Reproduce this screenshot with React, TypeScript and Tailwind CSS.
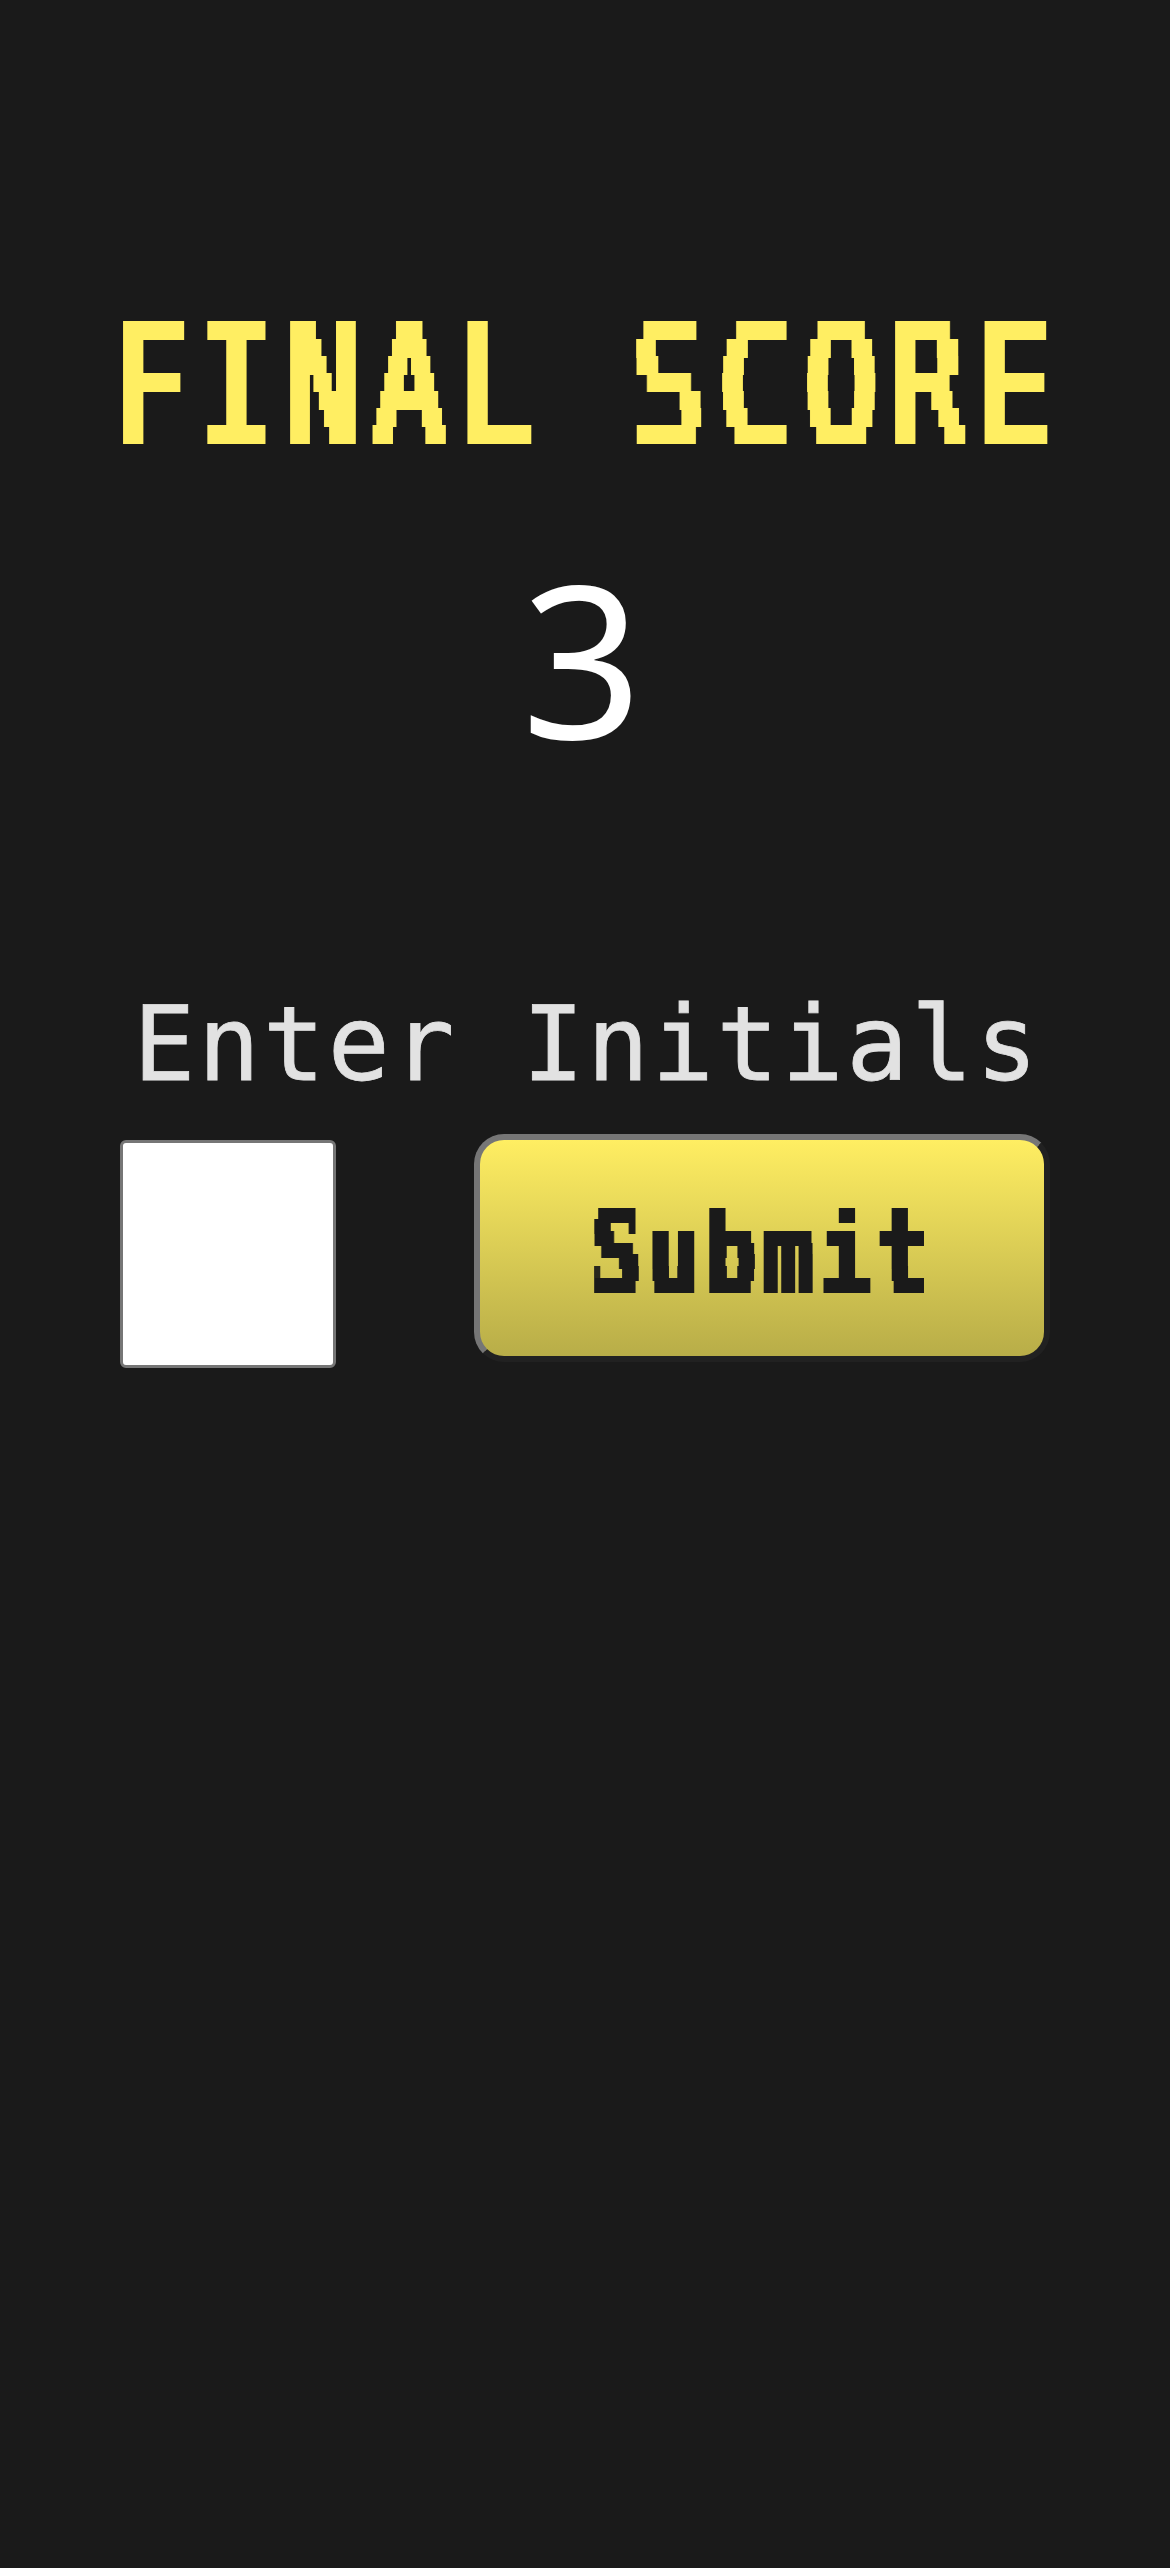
import React from "react";

type ScanlineProps = {
  id: string;
  top: number;
  clipTop: number;
  period: number;
  rows: number[];
  radius: string;
};

/* Samples text along evenly spaced lines and thickens them into terminal-style rows. */
function ScanlineFilter({ id, top, clipTop, period, rows, radius }: ScanlineProps) {
  return (
    <filter
      id={id}
      filterUnits="userSpaceOnUse"
      primitiveUnits="userSpaceOnUse"
      x="0"
      y={clipTop}
      width="960"
      height={220 - clipTop}
      colorInterpolationFilters="sRGB"
    >
      {rows.map((row, i) => (
        <feFlood key={i} x="0" y={top + row} width="960" height="1" floodColor="#000" result={`row${i}`} />
      ))}
      <feMerge x="0" y={top} width="960" height={period} result="cell">
        {rows.map((_, i) => (
          <feMergeNode key={i} in={`row${i}`} />
        ))}
      </feMerge>
      <feTile in="cell" result="lines" />
      <feComposite in="SourceGraphic" in2="lines" operator="in" result="samples" />
      <feMorphology in="samples" operator="dilate" radius={radius} />
    </filter>
  );
}

export default function App() {
  return (
    <main className="flex h-[2568px] w-[1170px] flex-col items-center overflow-hidden bg-[#1a1a1a] px-[120px] pt-[284px]">
      <svg className="absolute h-0 w-0" aria-hidden="true">
        <ScanlineFilter id="scan-title" top={38} clipTop={36} period={52} rows={[8, 26, 43]} radius="4 9" />
        <ScanlineFilter id="scan-button" top={69} clipTop={67} period={35} rows={[6, 17, 29]} radius="2 7" />
      </svg>
      <h1 className="flex h-[200px] w-[950px] shrink-0 items-center justify-center whitespace-pre pt-[6px] font-['DejaVu_Sans_Mono',monospace] text-[167px] leading-none font-normal text-[#ffee62] [filter:url(#scan-title)]">
        <span className="inline-block shrink-0 scale-x-[0.74] pl-[8px] tracking-[16.2px]">FINAL SCORE</span>
      </h1>
      <div className="mt-[53px] mr-[6px] flex h-[240px] items-center justify-center font-['Noto_Sans',sans-serif] text-[212px] leading-none text-white">
        3
      </div>
      <form className="mt-[196px] w-full" onSubmit={(e) => e.preventDefault()}>
        <label
          htmlFor="initials"
          className="mb-px flex h-[160px] items-center justify-center whitespace-pre pb-[18px] pl-[4px] font-['DejaVu_Sans_Mono',monospace] text-[103px] leading-none tracking-[2.8px] text-[#e2e2e2] [-webkit-text-stroke:0.8px_#e2e2e2]"
        >
          Enter Initials
        </label>
        <div className="flex items-start justify-between">
          <input
            id="initials"
            maxLength={3}
            className="mt-[6px] h-[228px] w-[216px] rounded-[6px] border-[3px] border-[#767676] bg-white px-4 text-center text-[80px] text-black"
          />
          <button
            type="submit"
            className="flex h-[228px] w-[576px] items-center justify-center rounded-[30px] border-[6px] border-t-[#767676] border-r-[#212121] border-b-[#212121] border-l-[#767676] bg-linear-to-b from-[#ffee62] to-[#b8ad48] font-['DejaVu_Sans_Mono',monospace] text-[116px] leading-none font-bold text-[#1a1a1a]"
          >
            <span className="flex h-full w-full items-center justify-center pt-[10px] [filter:url(#scan-button)]">
              <span className="inline-block scale-x-[0.74] tracking-[7.6px]">Submit</span>
            </span>
          </button>
        </div>
      </form>
    </main>
  );
}
